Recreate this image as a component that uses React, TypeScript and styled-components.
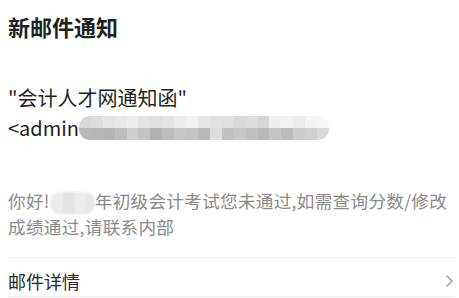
import React from "react";
import styled, { createGlobalStyle } from "styled-components";

const Global = createGlobalStyle`
  html, body { margin: 0; padding: 0; background: #fff; }
  body { font-family: "Noto Sans CJK SC", "Noto Sans", sans-serif; }
`;

const Page = styled.div`
  width: 459px;
  height: 298px;
  overflow: hidden;
  background: #fff;
  padding: 0 4px 0 8px;
  box-sizing: border-box;
  display: flex;
  flex-direction: column;
`;

const Title = styled.h1`
  margin: 11px 0 0;
  font-size: 22px;
  line-height: 30px;
  font-weight: 700;
  color: #1f1f1f;
`;

const Sender = styled.div`
  margin-top: 42px;
  font-size: 20px;
  line-height: 30px;
  color: #1f1f1f;
`;

const Line = styled.div`
  display: flex;
  align-items: center;
  white-space: nowrap;
`;

const Mosaic = styled.div<{ $w: number; $h: number }>`
  display: grid;
  grid-auto-flow: column;
  grid-template-rows: 1fr 1fr;
  width: ${(p) => p.$w}px;
  height: ${(p) => p.$h}px;
  border-radius: 11px;
  overflow: hidden;
  filter: blur(0.6px);
`;

const Cell = styled.div<{ $c: string }>`
  background: ${(p) => p.$c};
`;

const Body = styled.div`
  margin-top: 45px;
  font-size: 17.6px;
  line-height: 25px;
  color: #8a8a8a;
  letter-spacing: 0.3px;
`;

const Redact = styled.span`
  display: inline-block;
  vertical-align: middle;
  width: 45px;
  height: 22px;
  border-radius: 10px;
  background: linear-gradient(90deg, #ececec 0 30%, #e2e2e2 30% 55%, #ececec 55% 80%, #e6e6e6 80%);
  filter: blur(0.8px);
`;

const Divider = styled.div`
  margin-top: 18px;
  height: 1px;
  background: #ececec;
`;

const Row = styled.div`
  display: flex;
  align-items: center;
  justify-content: space-between;
  height: 39px;
  border-bottom: 1px solid #ececec;
  font-size: 18px;
  color: #2a2a2a;
  padding-top: 8px;
  box-sizing: border-box;
`;

const Chevron = styled.svg`
  width: 9px;
  height: 14px;
  margin-right: 1px;
`;

const top = ["#d8d8d8", "#dcdcdc", "#e4e4e4", "#e8e8e8", "#eeeeee", "#e4e4e4", "#e0e0e0", "#e4e4e4", "#ececec", "#f0f0f0", "#e6e6e6", "#e2e2e2", "#e0e0e0", "#dadada", "#dcdcdc", "#d6d6d6", "#f0f0f0", "#f2f2f2", "#ececec", "#f4f4f4", "#f6f6f6"];
const bot = ["#b8b8b8", "#b6b6b6", "#b4b4b4", "#bdbdbd", "#cfcfcf", "#c4c4c4", "#b2b2b2", "#bcbcbc", "#c6c6c6", "#c4c4c4", "#b8b8b8", "#dedede", "#c2c2c2", "#c8c8c8", "#c0c0c0", "#b8b8b8", "#c4c4c4", "#bcbcbc", "#cccccc", "#d0d0d0", "#dadada"];

export default function App() {
  return (
    <>
      <Global />
      <Page>
        <Title>新邮件通知</Title>
        <Sender>
          <Line>"会计人才网通知函"</Line>
          <Line>
            &lt;admin
            <Mosaic $w={250} $h={24}>
              {top.map((c, i) => (
                <React.Fragment key={i}>
                  <Cell $c={c} />
                  <Cell $c={bot[i]} />
                </React.Fragment>
              ))}
            </Mosaic>
          </Line>
        </Sender>
        <Body>
          你好!<Redact />年初级会计考试您未通过,如需查询分数/修改成绩通过,请联系内部
        </Body>
        <Divider />
        <Row>
          <span>邮件详情</span>
          <Chevron viewBox="0 0 9 14">
            <path d="M1.5 1.5 L7 7 L1.5 12.5" fill="none" stroke="#9a9a9a" strokeWidth="1.4" />
          </Chevron>
        </Row>
      </Page>
    </>
  );
}
